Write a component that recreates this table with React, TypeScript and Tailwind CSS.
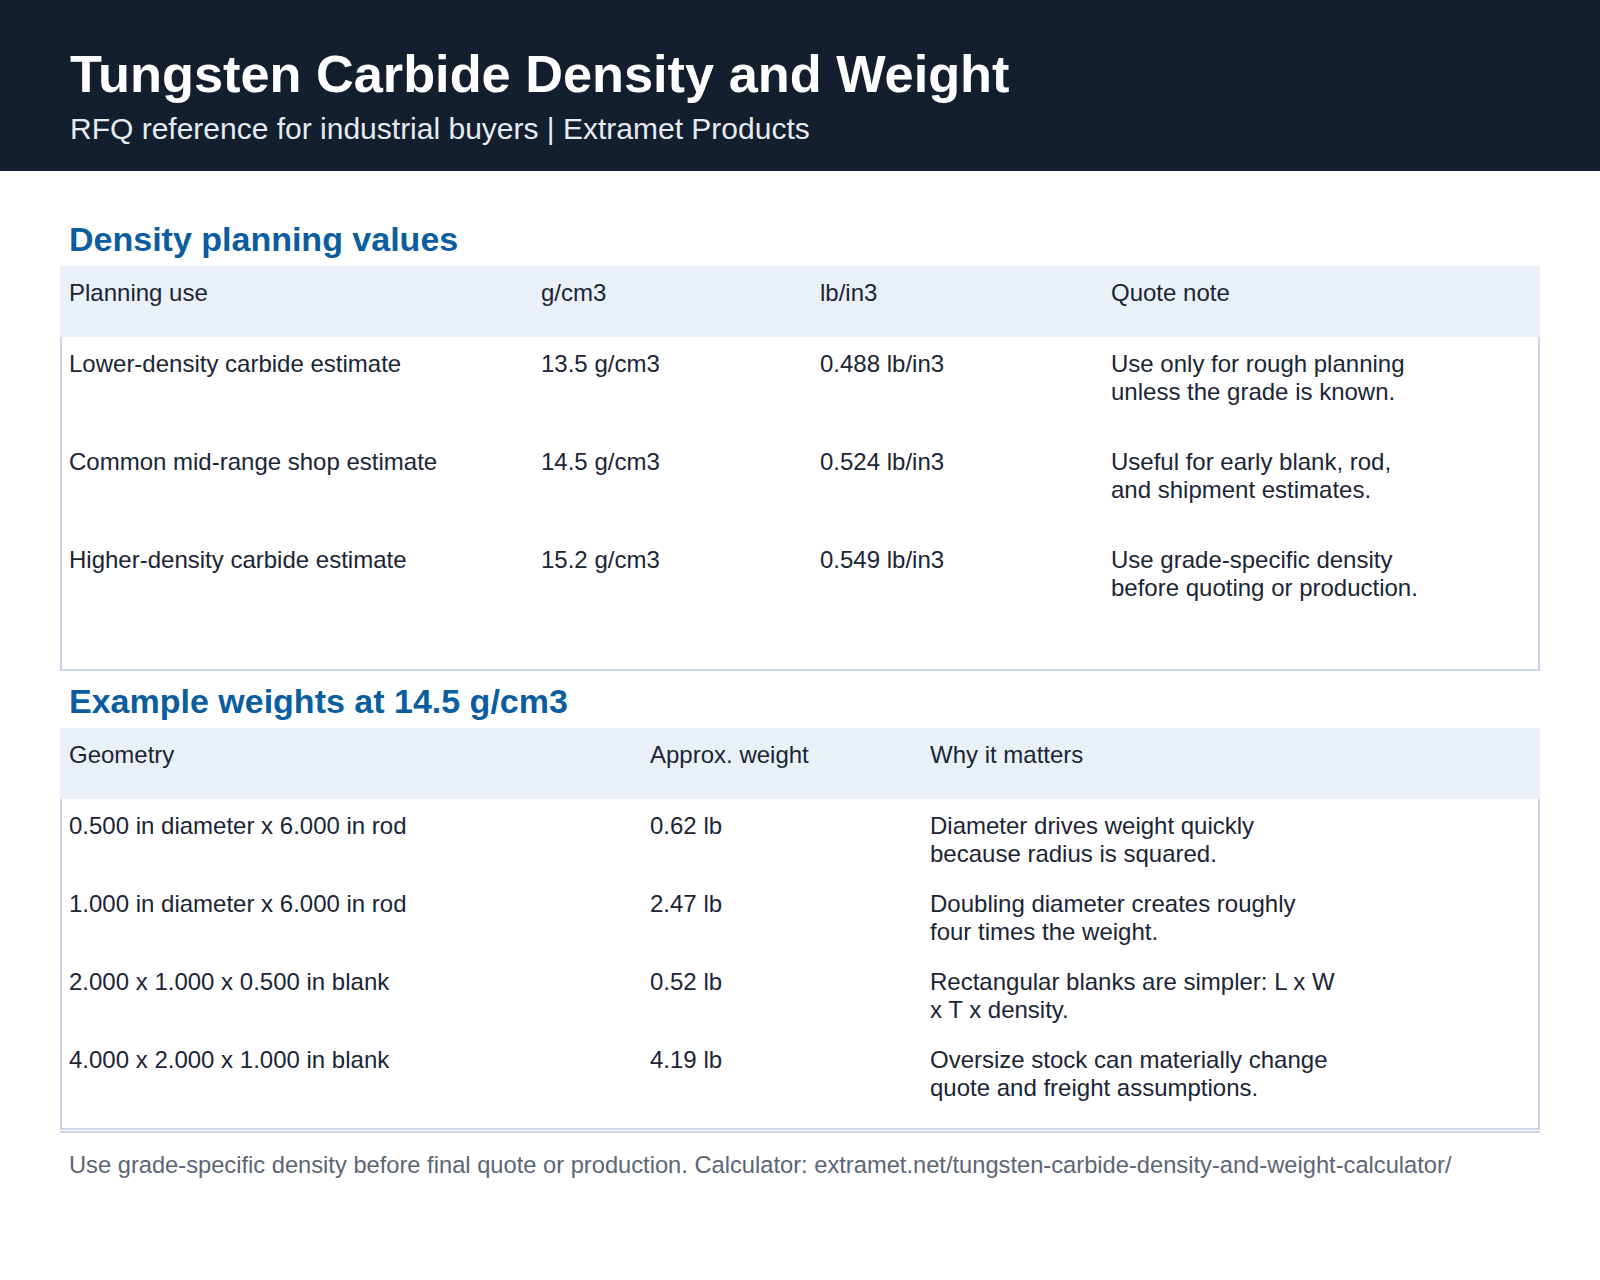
const densityRows = [
  {
    use: "Lower-density carbide estimate",
    metric: "13.5 g/cm3",
    imperial: "0.488 lb/in3",
    note: ["Use only for rough planning", "unless the grade is known."],
  },
  {
    use: "Common mid-range shop estimate",
    metric: "14.5 g/cm3",
    imperial: "0.524 lb/in3",
    note: ["Useful for early blank, rod,", "and shipment estimates."],
  },
  {
    use: "Higher-density carbide estimate",
    metric: "15.2 g/cm3",
    imperial: "0.549 lb/in3",
    note: ["Use grade-specific density", "before quoting or production."],
  },
];

const weightRows = [
  {
    geometry: "0.500 in diameter x 6.000 in rod",
    weight: "0.62 lb",
    why: ["Diameter drives weight quickly", "because radius is squared."],
  },
  {
    geometry: "1.000 in diameter x 6.000 in rod",
    weight: "2.47 lb",
    why: ["Doubling diameter creates roughly", "four times the weight."],
  },
  {
    geometry: "2.000 x 1.000 x 0.500 in blank",
    weight: "0.52 lb",
    why: ["Rectangular blanks are simpler: L x W", "x T x density."],
  },
  {
    geometry: "4.000 x 2.000 x 1.000 in blank",
    weight: "4.19 lb",
    why: ["Oversize stock can materially change", "quote and freight assumptions."],
  },
];

function Lines({ lines }: { lines: string[] }) {
  return (
    <>
      {lines.map((l) => (
        <span key={l} className="block">
          {l}
        </span>
      ))}
    </>
  );
}

function SectionTitle({ children }: { children: string }) {
  return (
    <h2 className="pl-[9px] text-[34px] font-bold leading-[40px] text-[#0a5d9f]">
      {children}
    </h2>
  );
}

export default function App() {
  return (
    <div className="min-h-[1280px] bg-white font-['Liberation_Sans',Arial,sans-serif] text-[#1b2535]">
      <header className="h-[171px] bg-[#131f2f] pl-[70px] pt-[44px]">
        <h1 className="text-[52.3px] font-bold leading-[60px] text-white">
          Tungsten Carbide Density and Weight
        </h1>
        <p className="mt-[7px] text-[30px] leading-[36px] text-[#e6ebf1]">
          RFQ reference for industrial buyers | Extramet Products
        </p>
      </header>

      <main className="px-[60px] pt-[48px]">
        <SectionTitle>Density planning values</SectionTitle>
        <div className="mt-[7px] text-[24px] leading-[28px]">
          <div className="grid h-[71px] grid-cols-[470px_279px_291px_1fr] bg-[#e9f0f7]">
            <div className="pl-[9px] pt-[13px]">Planning use</div>
            <div className="pl-[11px] pt-[13px]">g/cm3</div>
            <div className="pl-[11px] pt-[13px]">lb/in3</div>
            <div className="pl-[11px] pt-[13px]">Quote note</div>
          </div>
          <div className="h-[334px] border-x-2 border-b-2 border-[#cad6e3]">
            {densityRows.map((r) => (
              <div key={r.use} className="grid h-[98px] grid-cols-[468px_279px_291px_1fr]">
                <div className="pl-[7px] pt-[13px]">{r.use}</div>
                <div className="pl-[11px] pt-[13px]">{r.metric}</div>
                <div className="pl-[11px] pt-[13px]">{r.imperial}</div>
                <div className="pl-[11px] pt-[13px]">
                  <Lines lines={r.note} />
                </div>
              </div>
            ))}
          </div>
        </div>

        <div className="mt-[10px]">
          <SectionTitle>Example weights at 14.5 g/cm3</SectionTitle>
        </div>
        <div className="mt-[7px] text-[24px] leading-[28px]">
          <div className="grid h-[71px] grid-cols-[579px_280px_1fr] bg-[#e9f0f7]">
            <div className="pl-[9px] pt-[13px]">Geometry</div>
            <div className="pl-[11px] pt-[13px]">Approx. weight</div>
            <div className="pl-[11px] pt-[13px]">Why it matters</div>
          </div>
          <div className="h-[331px] border-x-2 border-b-2 border-[#cad6e3]">
            {weightRows.map((r) => (
              <div key={r.geometry} className="grid h-[78px] grid-cols-[577px_280px_1fr]">
                <div className="pl-[7px] pt-[13px]">{r.geometry}</div>
                <div className="pl-[11px] pt-[13px]">{r.weight}</div>
                <div className="pl-[11px] pt-[13px]">
                  <Lines lines={r.why} />
                </div>
              </div>
            ))}
          </div>
        </div>

        <footer className="mt-[1px] border-t-2 border-[#cad6e3] pl-[9px] pt-[18px] text-[23.7px] leading-[28px] text-[#5c6676]">
          Use grade-specific density before final quote or production. Calculator:
          extramet.net/tungsten-carbide-density-and-weight-calculator/
        </footer>
      </main>
    </div>
  );
}
